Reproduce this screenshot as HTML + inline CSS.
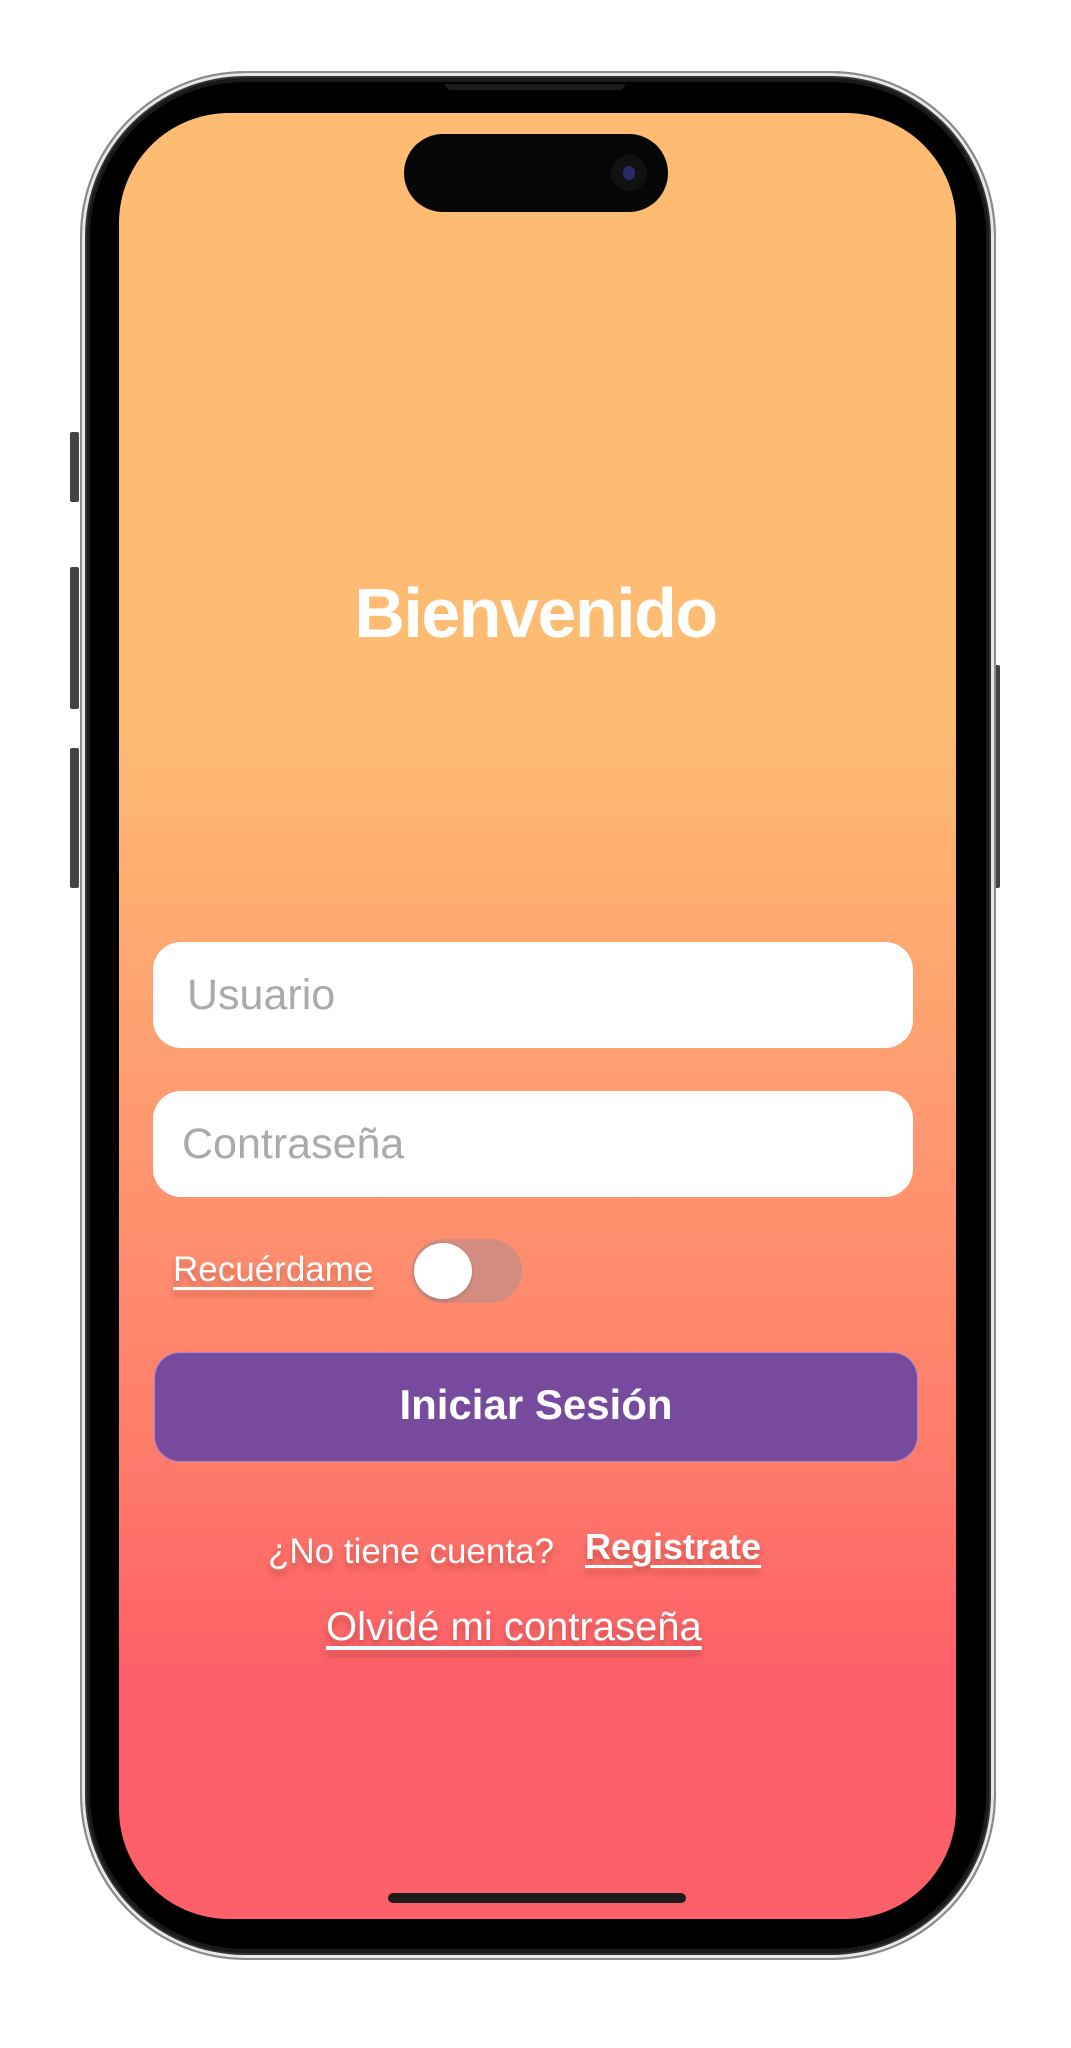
<!DOCTYPE html>
<html><head><meta charset="utf-8"><style>
html,body{margin:0;padding:0;width:1071px;height:2048px;background:#fff;overflow:hidden;font-family:"Liberation Sans",sans-serif}
.abs{position:absolute}
.frame{left:80px;top:71px;width:916px;height:1889px;border-radius:165px;background:#1a1a1a;border:2px solid #8a8a8a;box-sizing:border-box;box-shadow:inset 0 0 0 3px #e8e8e8,inset 0 0 0 5px #333}
.bezel{left:90px;top:82px;width:896px;height:1867px;border-radius:155px;background:#000}
.screen{left:119px;top:113px;width:837px;height:1806px;border-radius:110px;overflow:hidden;background:linear-gradient(to bottom,#fdbc72 0px,#fdbc72 600px,#ff9a70 1000px,#ff7a6a 1350px,#fd6068 1560px,#fd6068 1806px)}
.island{left:404px;top:134px;width:264px;height:78px;border-radius:39px;background:#060606}
.cam{left:611px;top:155px;width:36px;height:36px;border-radius:50%;background:#111}
.cam i{position:absolute;left:12px;top:11px;width:12px;height:14px;border-radius:50%;background:#2a2a6a}
.btn{background:#444;border-radius:2px}
.t{color:#fff;text-shadow:0 6px 6px rgba(120,40,30,.35);white-space:nowrap}
.field{left:153px;width:760px;height:106px;border-radius:28px;background:#fff}
.ph{position:absolute;color:#aaa;font-size:43px}
</style></head><body>
<div class="abs btn" style="left:70px;top:432px;width:9px;height:70px"></div>
<div class="abs btn" style="left:70px;top:567px;width:9px;height:142px"></div>
<div class="abs btn" style="left:70px;top:748px;width:9px;height:140px"></div>
<div class="abs btn" style="left:993px;top:665px;width:7px;height:223px"></div>
<div class="abs frame"></div>
<div class="abs bezel"></div>
<div class="abs" style="left:445px;top:84px;width:180px;height:6px;border-radius:0 0 6px 6px;background:#1c1c1c"></div>
<div class="abs screen"></div>
<div class="abs island"></div>
<div class="abs cam"><i></i></div>

<div class="abs t" style="left:0;width:1071px;top:573px;text-align:center;font-size:70px;font-weight:bold;text-shadow:none;letter-spacing:-1.5px">Bienvenido</div>

<div class="abs field" style="top:942px"><span class="ph" style="left:34px;top:29px">Usuario</span></div>
<div class="abs field" style="top:1091px"><span class="ph" style="left:29px;top:29px">Contraseña</span></div>

<div class="abs t" style="left:173px;top:1250px;font-size:35px;text-decoration:underline;text-underline-offset:6px">Recuérdame</div>
<div class="abs" style="left:412px;top:1239px;width:110px;height:64px;border-radius:32px;background:#d48b80"></div>
<div class="abs" style="left:414px;top:1243px;width:58px;height:56px;border-radius:50%;background:#fff;box-shadow:0 2px 4px rgba(0,0,0,.15)"></div>

<div class="abs" style="left:154px;top:1352px;width:764px;height:110px;border-radius:26px;background:#764a9c;border:1px solid #a88ac8;box-sizing:border-box"></div>
<div class="abs" style="left:154px;top:1381px;width:764px;text-align:center;color:#fff;font-size:42px;font-weight:bold">Iniciar Sesión</div>

<div class="abs t" style="left:268px;top:1532px;font-size:35px">¿No tiene cuenta?</div>
<div class="abs t" style="left:585px;top:1526px;font-size:36px;font-weight:bold;text-decoration:underline;text-underline-offset:6px">Registrate</div>
<div class="abs t" style="left:326px;top:1605px;font-size:40px;text-decoration:underline;text-underline-offset:6px">Olvidé mi contraseña</div>

<div class="abs" style="left:388px;top:1893px;width:298px;height:10px;border-radius:5px;background:#1c1c1c"></div>
</body></html>
